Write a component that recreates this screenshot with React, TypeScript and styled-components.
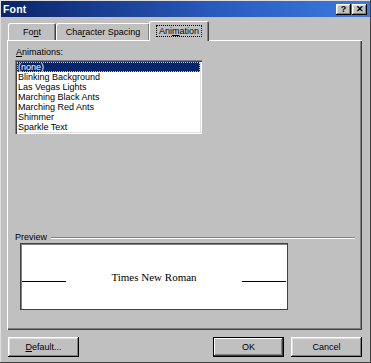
import React from 'react';
import styled, { createGlobalStyle, css } from 'styled-components';

const GlobalStyle = createGlobalStyle`
  html, body {
    margin: 0;
    padding: 0;
    background: #c0c0c0;
  }
  body {
    font-family: 'Liberation Sans', Arial, sans-serif;
    font-size: 9px;
    color: #000;
  }
`;

const raised = css`
  box-shadow: inset -1px -1px #000, inset 1px 1px #fff, inset -2px -2px #808080, inset 2px 2px #dfdfdf;
`;

const Window = styled.div`
  width: 371px;
  height: 363px;
  box-sizing: border-box;
  padding: 1px 1px 1px 1px;
  background: #c0c0c0;
  display: flex;
  flex-direction: column;
  box-shadow: inset -1px -1px #404040, inset 1px 1px #dfdfdf;
`;

const TitleBar = styled.div`
  height: 16px;
  flex: none;
  display: flex;
  align-items: center;
  padding: 0 3px 0 2px;
  background: linear-gradient(90deg, #0a246a 0%, #2a5cc0 60%, #3a7ae0 100%);
`;

const Title = styled.span`
  flex: 1;
  color: #fff;
  font-weight: bold;
  font-size: 10.5px;
  letter-spacing: 0.2px;
`;

const CaptionButton = styled.div`
  width: 15px;
  height: 11px;
  margin-left: 1px;
  background: #c0c0c0;
  ${raised};
  display: flex;
  align-items: center;
  justify-content: center;
  font-weight: bold;
  font-size: 9px;
  line-height: 1;
`;

const Body = styled.div`
  flex: 1;
  display: flex;
  flex-direction: column;
  padding: 0 8px 0 6px;
`;

const TabStrip = styled.div`
  height: 23px;
  display: flex;
  align-items: flex-end;
  padding-left: 1px;
  position: relative;
  z-index: 1;
`;

const Tab = styled.div<{ $active?: boolean; $width: number }>`
  width: ${p => p.$width}px;
  box-sizing: border-box;
  height: ${p => (p.$active ? 20 : 17)}px;
  margin-bottom: ${p => (p.$active ? -1 : 0)}px;
  margin-left: ${p => (p.$active ? -1 : 0)}px;
  background: #c0c0c0;
  border-radius: 2px 2px 0 0;
  box-shadow: inset 1px 1px #fff, inset -1px 0 #404040, inset -2px 0 #808080;
  display: flex;
  align-items: center;
  justify-content: center;
  padding-top: ${p => (p.$active ? 0 : 1)}px;
`;

const TabLabel = styled.span<{ $focus?: boolean }>`
  padding: 0 2px;
  outline: ${p => (p.$focus ? '1px dotted #000' : 'none')};
`;

const Key = styled.span`
  text-decoration: underline;
`;

const Panel = styled.div`
  height: 290px;
  box-sizing: border-box;
  display: flex;
  flex-direction: column;
  padding: 7px 7px 20px 8px;
  box-shadow: inset 1px 1px #fff, inset -1px -1px #404040, inset -2px -2px #808080;
`;

const FieldLabel = styled.div`
  height: 13px;
  line-height: 11px;
  padding-left: 1px;
`;

const ListBox = styled.div`
  width: 187px;
  height: 74px;
  box-sizing: border-box;
  background: #fff;
  padding: 2px;
  box-shadow: inset 1px 1px #808080, inset 2px 2px #404040, inset -1px -1px #fff, inset -2px -2px #dfdfdf;
`;

const ListItem = styled.div<{ $selected?: boolean }>`
  height: 10px;
  line-height: 10px;
  padding-left: 1px;
  white-space: nowrap;
  background: ${p => (p.$selected ? '#0a246a' : 'transparent')};
  color: ${p => (p.$selected ? '#fff' : '#000')};
  outline: ${p => (p.$selected ? '1px dotted #c0c0c0' : 'none')};
  outline-offset: -1px;
`;

const Spacer = styled.div`
  flex: 1;
`;

const GroupHead = styled.div`
  display: flex;
  align-items: center;
  height: 10px;
  margin-bottom: 1px;
`;

const GroupTitle = styled.span`
  padding-right: 4px;
`;

const Etched = styled.div`
  flex: 1;
  height: 0;
  border-top: 1px solid #808080;
  border-bottom: 1px solid #fff;
  margin-top: 1px;
`;

const PreviewBox = styled.div`
  margin-left: 5px;
  width: 268px;
  height: 67px;
  box-sizing: border-box;
  background: #fff;
  border: 1px solid #404040;
  box-shadow: inset 1px 1px #808080;
  display: flex;
  align-items: flex-end;
  padding: 0 1px 26px 1px;
`;

const Rule = styled.div`
  width: 44px;
  border-bottom: 1px solid #000;
  margin-bottom: 1px;
`;

const PreviewText = styled.div`
  flex: 1;
  text-align: center;
  font-family: 'Liberation Serif', 'Times New Roman', serif;
  font-size: 11px;
  line-height: 11px;
`;

const ButtonRow = styled.div`
  display: flex;
  margin-top: 7px;
  padding-left: 1px;
  gap: 7px;
`;

const Button = styled.div<{ $default?: boolean }>`
  width: 71px;
  height: 20px;
  box-sizing: border-box;
  display: flex;
  align-items: center;
  justify-content: center;
  background: #c0c0c0;
  ${p =>
    p.$default
      ? css`
          border: 1px solid #000;
          box-shadow: inset -1px -1px #404040, inset 1px 1px #fff, inset -2px -2px #808080;
        `
      : raised};
`;

const ButtonGap = styled.div`
  flex: 1;
`;

const animations = [
  '(none)',
  'Blinking Background',
  'Las Vegas Lights',
  'Marching Black Ants',
  'Marching Red Ants',
  'Shimmer',
  'Sparkle Text',
];

export default function App() {
  return (
    <>
      <GlobalStyle />
      <Window>
        <TitleBar>
          <Title>Font</Title>
          <CaptionButton>?</CaptionButton>
          <CaptionButton>✕</CaptionButton>
        </TitleBar>
        <Body>
          <TabStrip>
            <Tab $width={48}>
              <TabLabel>
                Fo<Key>n</Key>t
              </TabLabel>
            </Tab>
            <Tab $width={94}>
              <TabLabel>
                Cha<Key>r</Key>acter Spacing
              </TabLabel>
            </Tab>
            <Tab $active $width={60}>
              <TabLabel $focus>
                Ani<Key>m</Key>ation
              </TabLabel>
            </Tab>
          </TabStrip>
          <Panel>
            <FieldLabel>
              <Key>A</Key>nimations:
            </FieldLabel>
            <ListBox>
              {animations.map((a, i) => (
                <ListItem key={a} $selected={i === 0}>
                  {a}
                </ListItem>
              ))}
            </ListBox>
            <Spacer />
            <GroupHead>
              <GroupTitle>Preview</GroupTitle>
              <Etched />
            </GroupHead>
            <PreviewBox>
              <Rule />
              <PreviewText>Times New Roman</PreviewText>
              <Rule />
            </PreviewBox>
          </Panel>
          <ButtonRow>
            <Button>
              <span>
                <Key>D</Key>efault...
              </span>
            </Button>
            <ButtonGap />
            <Button $default>OK</Button>
            <Button>Cancel</Button>
          </ButtonRow>
        </Body>
      </Window>
    </>
  );
}
